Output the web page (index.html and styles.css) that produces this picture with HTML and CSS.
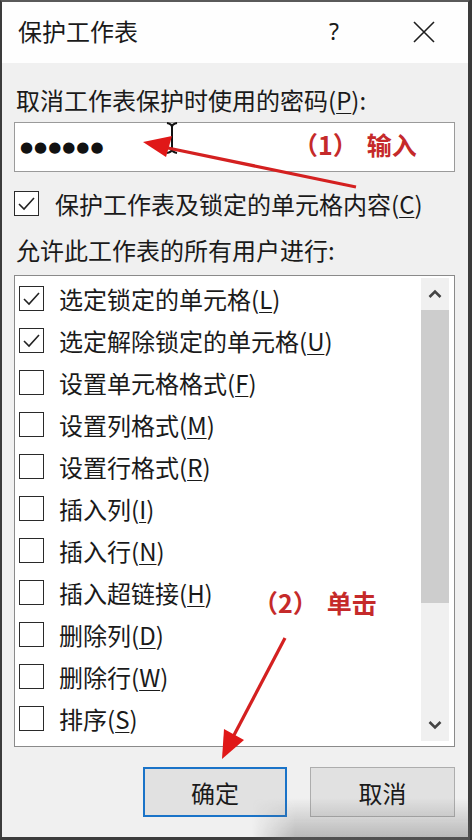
FILE: index.html
```html
<!DOCTYPE html>
<html lang="zh">
<head>
<meta charset="utf-8">
<link rel="stylesheet" href="styles.css">
</head>
<body>
<div class="dialog">
  <div class="titlebar">
    <span class="title">保护工作表</span>
    <span class="help">?</span>
    <span class="close">
      <svg width="22" height="22" viewBox="0 0 22 22"><path d="M1 1 L21 21 M21 1 L1 21" stroke="#1e1e1e" stroke-width="1.6" fill="none"/></svg>
    </span>
  </div>
  <div class="content">
    <div class="label">取消工作表保护时使用的密码(<u>P</u>):</div>
    <div class="pwd"><span class="dots">●●●●●●</span></div>
    <div class="check-row">
      <span class="box checked"><svg width="23" height="23" viewBox="0 0 23 23"><path d="M4 12 L9 17 L19 6" stroke="#222" stroke-width="1.6" fill="none"/></svg></span>
      <span>保护工作表及锁定的单元格内容(<u>C</u>)</span>
    </div>
    <div class="label allow">允许此工作表的所有用户进行:</div>
    <div class="listbox">
      <div class="items">
        <div class="item"><span class="box"><svg width="23" height="23" viewBox="0 0 23 23"><path d="M4 12 L9 17 L19 6" stroke="#222" stroke-width="1.6" fill="none"/></svg></span><span>选定锁定的单元格(<u>L</u>)</span></div>
        <div class="item"><span class="box"><svg width="23" height="23" viewBox="0 0 23 23"><path d="M4 12 L9 17 L19 6" stroke="#222" stroke-width="1.6" fill="none"/></svg></span><span>选定解除锁定的单元格(<u>U</u>)</span></div>
        <div class="item"><span class="box"></span><span>设置单元格格式(<u>F</u>)</span></div>
        <div class="item"><span class="box"></span><span>设置列格式(<u>M</u>)</span></div>
        <div class="item"><span class="box"></span><span>设置行格式(<u>R</u>)</span></div>
        <div class="item"><span class="box"></span><span>插入列(<u>I</u>)</span></div>
        <div class="item"><span class="box"></span><span>插入行(<u>N</u>)</span></div>
        <div class="item"><span class="box"></span><span>插入超链接(<u>H</u>)</span></div>
        <div class="item"><span class="box"></span><span>删除列(<u>D</u>)</span></div>
        <div class="item"><span class="box"></span><span>删除行(<u>W</u>)</span></div>
        <div class="item"><span class="box"></span><span>排序(<u>S</u>)</span></div>
      </div>
      <div class="scrollbar">
        <div class="arrow"><svg width="14" height="10" viewBox="0 0 14 10"><path d="M1.5 8 L7 2.5 L12.5 8" stroke="#444" stroke-width="2.6" fill="none"/></svg></div>
        <div class="track"><div class="thumb"></div></div>
        <div class="arrow"><svg width="14" height="10" viewBox="0 0 14 10"><path d="M1.5 2 L7 7.5 L12.5 2" stroke="#444" stroke-width="2.6" fill="none"/></svg></div>
      </div>
    </div>
    <div class="buttons">
      <div class="btn default">确定</div>
      <div class="btn">取消</div>
    </div>
  </div>

  <div class="note note1">（1）<span class="gap">输入</span></div>
  <div class="note note2">（2）<span class="gap">单击</span></div>
  <svg class="cursor" width="14" height="32" viewBox="0 0 14 32"><path d="M2 1 Q7 2 7 5 L7 27 Q7 30 2 31 M12 1 Q7 2 7 5 M7 27 Q7 30 12 31" stroke="#111" stroke-width="2" fill="none"/></svg>
  <svg class="arrows" width="472" height="840" viewBox="0 0 472 840">
    <line x1="356" y1="187" x2="168" y2="148" stroke="#d42020" stroke-width="3.2"/>
    <polygon points="143,142 172,136 166,157" fill="#e01818"/>
    <line x1="285" y1="638" x2="233" y2="737" stroke="#d42020" stroke-width="3.2"/>
    <polygon points="222,759 224,729 244,740" fill="#e01818"/>
  </svg>
  <div class="fade"></div>
</div>
</body>
</html>
```

FILE: styles.css
```css
html, body {
  margin: 0;
  padding: 0;
}
body {
  width: 472px;
  height: 840px;
  overflow: hidden;
  background: #3a3a3a;
  font-family: "Noto Sans CJK SC", "Noto Sans", sans-serif;
  color: #1a1a1a;
}
.dialog {
  position: relative;
  box-sizing: border-box;
  width: 470px;
  height: 840px;
  border-left: 2px solid #3c3c3c;
  border-top: 2px solid #5a5a5a;
  border-right: 2px solid #3c3c3c;
  border-bottom: 3px solid #3c3c3c;
  background: #f0f0f0;
  display: flex;
  flex-direction: column;
}
.titlebar {
  height: 61px;
  background: #fefefe;
  display: flex;
  align-items: center;
  padding-left: 16px;
  flex-shrink: 0;
}
.title {
  font-size: 24px;
  line-height: 30px;
  margin-top: -3px;
}
.help {
  margin-left: 191px;
  font-size: 23px;
  font-family: "Noto Sans", sans-serif;
  margin-top: -4px;
}
.close {
  margin-left: 74px;
  display: flex;
  margin-top: -2px;
}
.content {
  padding: 0 13px 0 12px;
  display: flex;
  flex-direction: column;
}
.label {
  font-size: 24px;
  line-height: 30px;
  margin-top: 22px;
  padding-left: 2px;
  white-space: nowrap;
}
.label u, .check-row u, .item u {
  text-decoration-thickness: 1px;
  text-underline-offset: 3px;
}
.pwd {
  margin-top: 7px;
  height: 48px;
  background: #fff;
  border: 1px solid #9a9a9a;
  display: flex;
  align-items: center;
  padding-left: 5px;
}
.dots {
  font-family: "DejaVu Sans", sans-serif;
  font-size: 15px;
  letter-spacing: 1px;
  color: #111;
}
.check-row {
  margin-top: 16px;
  height: 30px;
  display: flex;
  align-items: center;
  font-size: 24px;
  white-space: nowrap;
}
.box {
  box-sizing: border-box;
  width: 25px;
  height: 25px;
  border: 1.5px solid #2a2a2a;
  background: #fff;
  display: flex;
  align-items: center;
  justify-content: center;
  flex-shrink: 0;
}
.check-row .box {
  margin-right: 16px;
}
.label.allow {
  margin-top: 17px;
}
.listbox {
  margin-top: 10px;
  height: 470px;
  background: #fff;
  border: 1px solid #8a8a8a;
  display: flex;
}
.items {
  flex: 1;
  padding-top: 1px;
  padding-left: 4px;
}
.item {
  height: 42px;
  display: flex;
  align-items: center;
  font-size: 24px;
  white-space: nowrap;
}
.item .box {
  margin-right: 15px;
}
.scrollbar {
  width: 28px;
  margin: 2px 5px 5px 0;
  background: #f0f0f0;
  display: flex;
  flex-direction: column;
}
.arrow {
  height: 32px;
  display: flex;
  align-items: center;
  justify-content: center;
  flex-shrink: 0;
}
.track {
  flex: 1;
}
.thumb {
  height: 293px;
  background: #cdcdcd;
}
.buttons {
  margin-top: 20px;
  display: flex;
  justify-content: flex-end;
  gap: 23px;
}
.btn {
  box-sizing: border-box;
  width: 145px;
  height: 50px;
  background: #e1e1e1;
  border: 1px solid #adadad;
  display: flex;
  align-items: center;
  justify-content: center;
  font-size: 24px;
}
.btn.default {
  border: 2px solid #1a73c8;
  width: 144px;
}
.note {
  position: absolute;
  color: #c52a2a;
  font-weight: bold;
  font-size: 25px;
  line-height: 30px;
  white-space: nowrap;
}
.note .gap {
  margin-left: 9px;
}
.note1 {
  left: 291px;
  top: 127px;
}
.note2 {
  left: 251px;
  top: 585px;
}
.cursor {
  position: absolute;
  left: 163px;
  top: 120px;
}
.arrows {
  position: absolute;
  left: -2px;
  top: -2px;
}
.fade {
  position: absolute;
  left: 250px;
  right: -2px;
  bottom: -3px;
  height: 42px;
  background: linear-gradient(to bottom, rgba(160,160,160,0), rgba(110,110,110,0.45));
  -webkit-mask-image: linear-gradient(to right, transparent, #000 20%);
  mask-image: linear-gradient(to right, transparent, #000 20%);
}
```
